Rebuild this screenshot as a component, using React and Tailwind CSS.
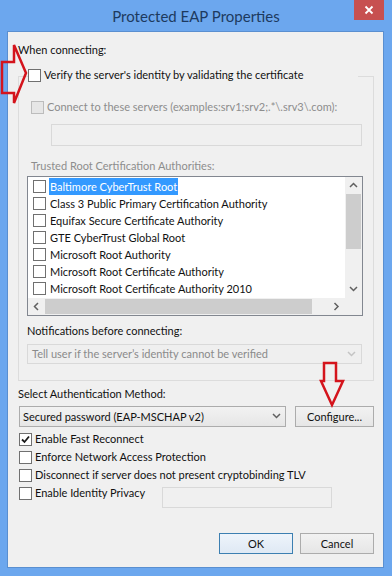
const Check = ({ checked = false, disabled = false }) => (
  <div
    className={
      "w-[13px] h-[13px] shrink-0 border flex items-center justify-center " +
      (disabled ? "border-[#bcbcbc] bg-[#e6e6e6]" : "border-[#707070] bg-white")
    }
  >
    {checked && (
      <svg width="9" height="9" viewBox="0 0 9 9">
        <path d="M1 4.5 L3.5 7 L8 1.5" fill="none" stroke="#1a1a1a" strokeWidth="1.8" />
      </svg>
    )}
  </div>
);

const Chevron = ({ dir = "down", color = "#606060" }) => {
  const d = {
    down: "M1 2 L4.5 5.5 L8 2",
    up: "M1 6 L4.5 2.5 L8 6",
    left: "M6 1 L2.5 4.5 L6 8",
    right: "M2.5 1 L6 4.5 L2.5 8",
  }[dir];
  return (
    <svg width="9" height="9" viewBox="0 0 9 9">
      <path d={d} fill="none" stroke={color} strokeWidth="1.5" />
    </svg>
  );
};

const items = [
  "Baltimore CyberTrust Root",
  "Class 3 Public Primary Certification Authority",
  "Equifax Secure Certificate Authority",
  "GTE CyberTrust Global Root",
  "Microsoft Root Authority",
  "Microsoft Root Certificate Authority",
  "Microsoft Root Certificate Authority 2010",
];

export default function App() {
  return (
    <div className="relative w-[392px] h-[576px] bg-[#6ca7ee] overflow-hidden font-['Lato',sans-serif] text-[11px] leading-[16px] text-[#111111] whitespace-nowrap">
      {/* title bar */}
      <div className="flex h-[31px]">
        <div className="flex-1 flex items-center justify-center pl-[38px] pt-[1px]">
          <span className="text-[15px] text-[#1d3a5f]">Protected EAP Properties</span>
        </div>
        <div className="w-[30px] h-[20px] mr-[8px] bg-[#c75050] flex items-center justify-center">
          <svg width="10" height="10" viewBox="0 0 10 10">
            <path d="M1.5 1.5 L8.5 8.5 M8.5 1.5 L1.5 8.5" stroke="white" strokeWidth="1.8" />
          </svg>
        </div>
      </div>

      {/* client area */}
      <div className="ml-[7px] w-[377px] h-[537px] bg-[#f0f0f0] border border-[#5a8fd0] flex flex-col pl-[10px] pr-[9px]">
        <div className="mt-[10px] h-[16px]">When connecting:</div>

        {/* group box */}
        <div className="mt-[18px] border border-[#dcdcdc] flex flex-col pb-[16px]">
          <div className="-mt-[10px] ml-[9px] h-[16px] flex items-center w-[330px] bg-[#f0f0f0]">
            <Check />
            <span className="ml-[3px]">Verify the server's identity by validating the certificate</span>
          </div>
          <div className="mt-[16px] ml-[12px] h-[16px] flex items-center text-[#8d8d8d]">
            <Check disabled />
            <span className="ml-[3px]">Connect to these servers (examples:srv1;srv2;.*\.srv3\.com):</span>
          </div>
          <div className="mt-[9px] ml-[32px] w-[311px] h-[22px] border border-[#d9d9d9] bg-[#f0f0f0]" />
          <div className="mt-[12px] ml-[12px] h-[16px] text-[#8d8d8d]">Trusted Root Certification Authorities:</div>

          {/* list box */}
          <div className="mt-[2px] ml-[8px] w-[336px] h-[140px] border border-[#828790] bg-white flex flex-col">
            <div className="flex h-[121px]">
              <div className="flex-1 pt-[1px] flex flex-col">
                {items.map((t, i) => (
                  <div key={t} className="h-[17px] flex items-center">
                    <div className="ml-[5px]">
                      <Check />
                    </div>
                    <span
                      className={
                        "ml-[3px] px-[1px] h-[17px] flex items-center " +
                        (i === 0 ? "bg-[#3399ff] text-white" : "")
                      }
                    >
                      {t}
                    </span>
                  </div>
                ))}
              </div>
              <div className="w-[17px] bg-[#f0f0f0] flex flex-col">
                <div className="h-[17px] flex items-center justify-center">
                  <Chevron dir="up" />
                </div>
                <div className="h-[55px] mx-[1px] bg-[#cdcdcd]" />
                <div className="flex-1" />
                <div className="h-[17px] flex items-center justify-center">
                  <Chevron dir="down" />
                </div>
              </div>
            </div>
            <div className="flex h-[17px]">
              <div className="flex-1 bg-[#f0f0f0] flex">
                <div className="w-[17px] flex items-center justify-center">
                  <Chevron dir="left" />
                </div>
                <div className="w-[267px] my-[1px] bg-[#cdcdcd]" />
                <div className="flex-1" />
                <div className="w-[17px] flex items-center justify-center">
                  <Chevron dir="right" />
                </div>
              </div>
              <div className="w-[17px] bg-[#f0f0f0]" />
            </div>
          </div>

          <div className="mt-[7px] ml-[8px] h-[16px]">Notifications before connecting:</div>
          <div className="mt-[5px] ml-[8px] w-[335px] h-[20px] border border-[#d9d9d9] bg-[#efefef] flex items-center pl-[4px] pr-[5px] text-[#8a8a8a]">
            <span className="flex-1">Tell user if the server’s identity cannot be verified</span>
            <Chevron dir="down" color="#c4c4c4" />
          </div>
        </div>

        <div className="mt-[5px] h-[16px]">Select Authentication Method:</div>
        <div className="mt-[4px] flex h-[21px]">
          <div className="ml-[1px] w-[267px] border border-[#acacac] bg-gradient-to-b from-[#f2f2f2] to-[#e6e6e6] flex items-center pl-[3px] pr-[4px]">
            <span className="flex-1">Secured password (EAP-MSCHAP v2)</span>
            <Chevron dir="down" />
          </div>
          <div className="ml-[9px] w-[79px] border border-[#acacac] bg-gradient-to-b from-[#f2f2f2] to-[#e6e6e6] flex items-center justify-center">
            Configure...
          </div>
        </div>

        <div className="mt-[3px] h-[18px] flex items-center ml-[1px]">
          <Check checked />
          <span className="ml-[3px]">Enable Fast Reconnect</span>
        </div>
        <div className="h-[18px] flex items-center ml-[1px]">
          <Check />
          <span className="ml-[3px]">Enforce Network Access Protection</span>
        </div>
        <div className="h-[18px] flex items-center ml-[1px]">
          <Check />
          <span className="ml-[3px]">Disconnect if server does not present cryptobinding TLV</span>
        </div>
        <div className="flex items-start ml-[1px]">
          <div className="h-[18px] flex items-center">
            <Check />
            <span className="ml-[3px] w-[127px]">Enable Identity Privacy</span>
          </div>
          <div className="mt-[3px] w-[170px] h-[21px] border border-[#d9d9d9] bg-[#f0f0f0]" />
        </div>

        <div className="mt-[25px] flex justify-end gap-[7px]">
          <div className="w-[74px] h-[21px] border border-[#3c7fb1] bg-gradient-to-b from-[#eef4fb] to-[#dfe9f4] flex items-center justify-center">
            OK
          </div>
          <div className="w-[74px] h-[21px] border border-[#acacac] bg-gradient-to-b from-[#f2f2f2] to-[#e6e6e6] flex items-center justify-center">
            Cancel
          </div>
        </div>
      </div>

      {/* red annotation arrows */}
      <svg className="absolute left-0 top-0 pointer-events-none" width="392" height="576">
        <path
          d="M2 62 L14 62 L14 45 L26 73 L14 103 L14 93 L2 93 Z"
          fill="none"
          stroke="#d4141c"
          strokeWidth="2.5"
          strokeLinejoin="miter"
        />
        <path
          d="M324 363 L336 363 L336 381 L343 381 L332 405 L321 381 L324 381 Z"
          fill="none"
          stroke="#d4141c"
          strokeWidth="2.5"
        />
      </svg>
    </div>
  );
}
